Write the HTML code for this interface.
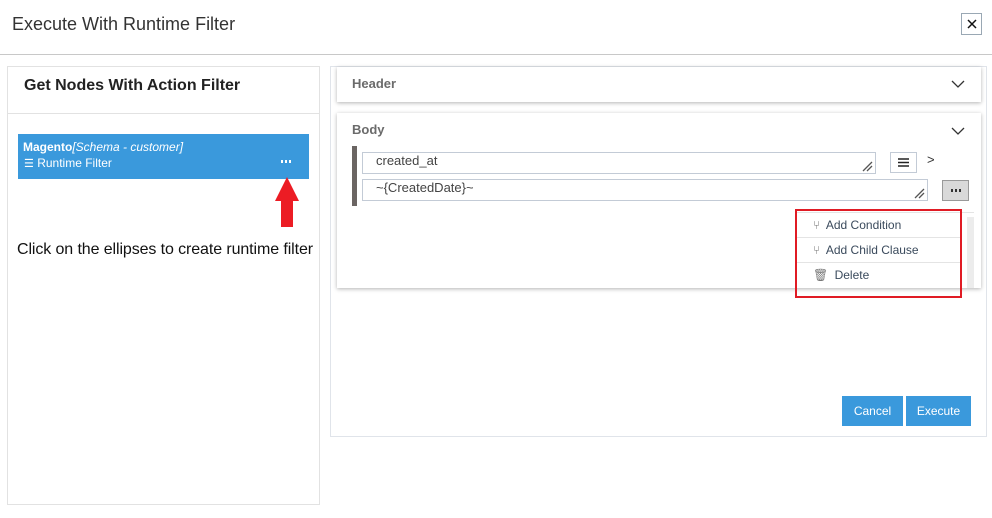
<!DOCTYPE html>
<html><head><style>
*{box-sizing:border-box;margin:0;padding:0}
body{width:992px;height:518px;background:#fff;font-family:"Liberation Sans",Arial,sans-serif;position:relative;overflow:hidden;color:#333}
.a{position:absolute}
.inp{position:absolute;border:1px solid #c3cbd6;background:#fff;font-size:13px;color:#444;padding:0 0 0 13px}
.grip{position:absolute;right:2px;bottom:1px;width:12px;height:12px}
.mi{position:absolute;left:1px;right:12px;height:25px;font-size:12px;color:#3a4a5c;padding:5px 0 0 16px;border-bottom:1px solid #e4e4e4}
.btn{position:absolute;background:#3a99dc;color:#fff;font-size:12px;text-align:center;line-height:30px;height:30px;top:396px}
</style></head><body>
<div class="a" style="left:12px;top:14px;font-size:18px;color:#333">Execute With Runtime Filter</div>
<div class="a" style="left:961px;top:13px;width:21px;height:22px;border:1px solid #9aa8b4"><svg class="a" style="left:5px;top:5px" width="10" height="10"><path d="M1 1L9 9M9 1L1 9" stroke="#111" stroke-width="1.5"/></svg></div>
<div class="a" style="left:0;top:54px;width:992px;height:1px;background:#c8c8c8"></div>

<div class="a" style="left:7px;top:66px;width:313px;height:439px;border:1px solid #e2e2e2"></div>
<div class="a" style="left:7px;top:66px;width:313px;height:48px;border:1px solid #e2e2e2"></div>
<div class="a" style="left:24px;top:77px;font-size:16px;font-weight:bold;color:#222">Get Nodes With Action Filter</div>
<div class="a" style="left:18px;top:134px;width:291px;height:45px;background:#3a99dc;color:#fff;font-size:12px">
 <div class="a" style="left:5px;top:6px"><b>Magento</b><i>[Schema - customer]</i></div>
 <div class="a" style="left:6px;top:22px;font-size:12px"><span style="font-size:11px">☰</span> Runtime Filter</div>
 <svg class="a" style="left:263px;top:26px" width="10" height="3"><rect width="2" height="3" fill="#fff"/><rect x="4" width="2" height="3" fill="#fff"/><rect x="8" width="2" height="3" fill="#fff"/></svg>
</div>
<svg class="a" style="left:274px;top:176px" width="26" height="52"><polygon points="13,1 25,25 19,25 19,51 7,51 7,25 1,25" fill="#ec1c24"/></svg>
<div class="a" style="left:17px;top:241px;font-size:16px;color:#111;letter-spacing:-0.1px">Click on the ellipses to create runtime filter</div>

<div class="a" style="left:330px;top:66px;width:657px;height:371px;border:1px solid #e0e4ea"></div>
<div class="a" style="left:337px;top:67px;width:644px;height:35px;background:#fff;box-shadow:0 1px 4px rgba(0,0,0,.3)"></div>
<div class="a" style="left:352px;top:76px;font-size:13px;font-weight:bold;color:#6b6b6b">Header</div>
<svg class="a" style="left:951px;top:80px" width="14" height="9"><polyline points="1,1 7,7 13,1" fill="none" stroke="#333" stroke-width="1.3"/></svg>
<div class="a" style="left:337px;top:113px;width:644px;height:175px;background:#fff;box-shadow:0 1px 4px rgba(0,0,0,.3)"></div>
<div class="a" style="left:352px;top:122px;font-size:13px;font-weight:bold;color:#6b6b6b">Body</div>
<svg class="a" style="left:951px;top:127px" width="14" height="9"><polyline points="1,1 7,7 13,1" fill="none" stroke="#333" stroke-width="1.3"/></svg>
<div class="a" style="left:352px;top:146px;width:5px;height:60px;background:#6b6563"></div>
<div class="inp" style="left:362px;top:152px;width:514px;height:22px">created_at<svg class="grip" viewBox="0 0 12 12"><path d="M2 11L11 2M6 11L11 6" stroke="#555" stroke-width="1.3"/></svg></div>
<div class="inp" style="left:362px;top:179px;width:566px;height:22px">~{CreatedDate}~<svg class="grip" viewBox="0 0 12 12"><path d="M2 11L11 2M6 11L11 6" stroke="#555" stroke-width="1.3"/></svg></div>
<div class="a" style="left:890px;top:152px;width:27px;height:21px;border:1px solid #c3cbd6"><svg class="a" style="left:7px;top:5px" width="11" height="9"><path d="M0 1H11M0 4.5H11M0 8H11" stroke="#222" stroke-width="1.6"/></svg></div>
<div class="a" style="left:927px;top:152px;font-size:13px">&gt;</div>
<div class="a" style="left:942px;top:180px;width:27px;height:21px;border:1px solid #999;background:#d9d9d9"><svg class="a" style="left:8px;top:8px" width="10" height="3"><rect width="2" height="3" fill="#333"/><rect x="4" width="2" height="3" fill="#333"/><rect x="8" width="2" height="3" fill="#333"/></svg></div>

<div class="a" style="left:796px;top:212px;width:178px;height:75px;background:#fff;border-top:1px solid #e4e4e4">
 <div class="a" style="right:0;top:4px;width:7px;height:71px;background:#ececec"></div>
 <div class="mi" style="top:0"><span style="color:#777;margin-right:3px">⑂</span> Add Condition</div>
 <div class="mi" style="top:25px"><span style="color:#777;margin-right:3px">⑂</span> Add Child Clause</div>
 <div class="mi" style="top:50px;border:none"><span style="color:#777;margin-right:3px">🗑</span> Delete</div>
</div>
<div class="a" style="left:795px;top:209px;width:167px;height:89px;border:2px solid #e01b24"></div>

<div class="btn" style="left:842px;width:61px">Cancel</div>
<div class="btn" style="left:906px;width:65px">Execute</div>
</body></html>
